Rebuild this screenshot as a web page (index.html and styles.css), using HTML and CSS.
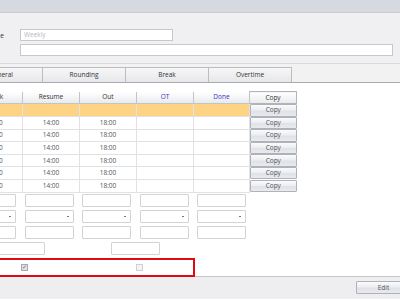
FILE: index.html
```html
<!DOCTYPE html>
<html lang="en">
<head>
<meta charset="UTF-8">
<title>Shift Pattern</title>
<link rel="stylesheet" href="styles.css">
</head>
<body>
<div class="titlebar"></div>
<section class="head">
    <div class="row">
        <label class="lbl">Type</label>
        <div class="input short placeholder">Weekly</div>
    </div>
    <div class="row">
        <label class="lbl"></label>
        <div class="input long"></div>
    </div>
</section>
<nav class="tabs">
    <div class="tab">General</div>
    <div class="tab">Rounding</div>
    <div class="tab">Break</div>
    <div class="tab">Overtime</div>
</nav>
<main class="panel">
    <table class="grid">
        <colgroup>
            <col style="width:56px"><col style="width:57px"><col style="width:57px">
            <col style="width:57px"><col style="width:56px"><col style="width:47px">
        </colgroup>
        <thead>
            <tr>
                <th>Break</th><th>Resume</th><th>Out</th>
                <th class="blue">OT</th><th class="blue">Done</th><th class="hbtn">Copy</th>
            </tr>
        </thead>
        <tbody>
            <tr class="sel"><td></td><td></td><td></td><td></td><td></td><td class="bc"><button>Copy</button></td></tr>
            <tr><td>13:00</td><td>14:00</td><td>18:00</td><td></td><td></td><td class="bc"><button>Copy</button></td></tr>
            <tr><td>13:00</td><td>14:00</td><td>18:00</td><td></td><td></td><td class="bc"><button>Copy</button></td></tr>
            <tr><td>13:00</td><td>14:00</td><td>18:00</td><td></td><td></td><td class="bc"><button>Copy</button></td></tr>
            <tr><td>13:00</td><td>14:00</td><td>18:00</td><td></td><td></td><td class="bc"><button>Copy</button></td></tr>
            <tr><td>13:00</td><td>14:00</td><td>18:00</td><td></td><td></td><td class="bc"><button>Copy</button></td></tr>
            <tr><td>13:00</td><td>14:00</td><td>18:00</td><td></td><td></td><td class="bc"><button>Copy</button></td></tr>
        </tbody>
    </table>
    <div class="fields">
        <div class="frow">
            <div class="box"></div><div class="box"></div><div class="box"></div><div class="box"></div><div class="box"></div>
        </div>
        <div class="frow">
            <div class="box drop"></div><div class="box drop"></div><div class="box drop"></div><div class="box drop"></div><div class="box drop"></div>
        </div>
        <div class="frow">
            <div class="box"></div><div class="box"></div><div class="box"></div><div class="box"></div><div class="box"></div>
        </div>
        <div class="frow pair">
            <div class="box"></div><div class="box"></div>
        </div>
    </div>
    <div class="flags">
        <span class="check on">&#10003;</span>
        <span class="check"></span>
    </div>
</main>
<footer class="bar">
    <button class="edit">Edit</button>
</footer>
</body>
</html>
```

FILE: styles.css
```css
body{
    margin:0;
    width:400px;
    height:300px;
    overflow:hidden;
    font-family:"Open Sans","Liberation Sans",sans-serif;
    font-size:6.5px;
    color:#555;
    background:#fff;
}
.titlebar{
    height:12px;
    background:#d7d9e1;
    border-bottom:1px solid #c9ccd4;
}
.head{
    height:51px;
    padding-top:16px;
    box-sizing:border-box;
    background:#f0f0f2;
    border-bottom:1px solid #dadadd;
}
.row{display:flex;align-items:center;margin-bottom:3px;}
.lbl{
    width:40px;
    margin-left:-36px;
    margin-right:16px;
    text-align:right;
    color:#333;
}
.input{
    height:12px;
    box-sizing:border-box;
    background:#fff;
    border:1px solid #c8c8cc;
    padding:0 3px;
    line-height:10px;
}
.placeholder{color:#b8b8b8;}
.short{width:153px;}
.long{width:373px;}
.tabs{
    display:flex;
    height:19px;
    box-sizing:border-box;
    padding-top:3px;
    margin-left:-41px;
    background:#f2f2f3;
    border-bottom:1px solid #a9abb0;
}
.tab{
    width:84px;
    box-sizing:border-box;
    border:1px solid #bcbdc2;
    border-bottom:none;
    margin-right:-1px;
    background:linear-gradient(#f7f7f8,#e6e7ea);
    text-align:center;
    line-height:14px;
    color:#333;
}
.panel{
    height:194px;
    padding-top:8px;
    box-sizing:border-box;
    background:#fff;
    border-bottom:1px solid #c6c7cc;
}
.grid{
    table-layout:fixed;
    border-collapse:collapse;
    margin-left:-34px;
    width:330px;
    line-height:8px;
}
.grid th{
    height:11px;
    padding:0;
    font-weight:normal;
    color:#333;
    background:linear-gradient(#ffffff,#e9eaec);
    border:1px solid #c3c4c8;
    border-top:none;
}
.grid th.blue{color:#3535c8;}
.grid th.hbtn{border:1px solid #b4b5ba;}
.grid td{
    height:11.6px;
    padding:0;
    text-align:center;
    border:1px solid #e2e2e4;
    border-top:none;
}
.grid tr.sel td{background:#fed383;}
.grid td.bc{border:none;padding:0;background:#fff;}
.grid tr.sel td.bc{background:#fff;}
.bc button,.edit{
    display:block;
    width:100%;
    height:12.5px;
    padding:0;
    font:inherit;
    line-height:8px;
    color:#555;
    background:linear-gradient(#fafbfc 0%,#eceef2 45%,#dfe2e8 55%,#e8eaee 100%);
    border:1px solid #b0b2b8;
    border-radius:1px;
}
.fields{margin-top:1px;}
.frow{
    display:flex;
    gap:8.5px;
    margin-left:-33px;
    margin-bottom:3px;
}
.frow.pair{gap:66px;margin-left:-4px;}
.box{
    position:relative;
    width:49px;
    height:13px;
    box-sizing:border-box;
    border:1px solid #d3d3d6;
    border-radius:1px;
    background:#fff;
}
.drop::after{
    content:"";
    position:absolute;
    right:4px;
    top:5px;
    width:2px;
    height:1px;
    background:#777;
}
.flags{
    display:flex;
    align-items:center;
    gap:108px;
    height:19px;
    width:202px;
    margin-left:-7px;
    padding-left:26px;
    box-sizing:border-box;
    border:2px solid #e10a12;
}
.check{
    width:7px;
    height:7px;
    box-sizing:border-box;
    border:1px solid #d0d0d4;
    background:#f4f4f6;
    font-size:6px;
    line-height:5px;
    text-align:center;
    color:#666;
}
.check.on{border-color:#a8a8ae;background:#e2e2e6;}
.bar{
    height:22px;
    padding-top:4px;
    box-sizing:border-box;
    background:#eeeef0;
}
.edit{
    width:55px;
    height:13px;
    margin-left:356px;
}
```
